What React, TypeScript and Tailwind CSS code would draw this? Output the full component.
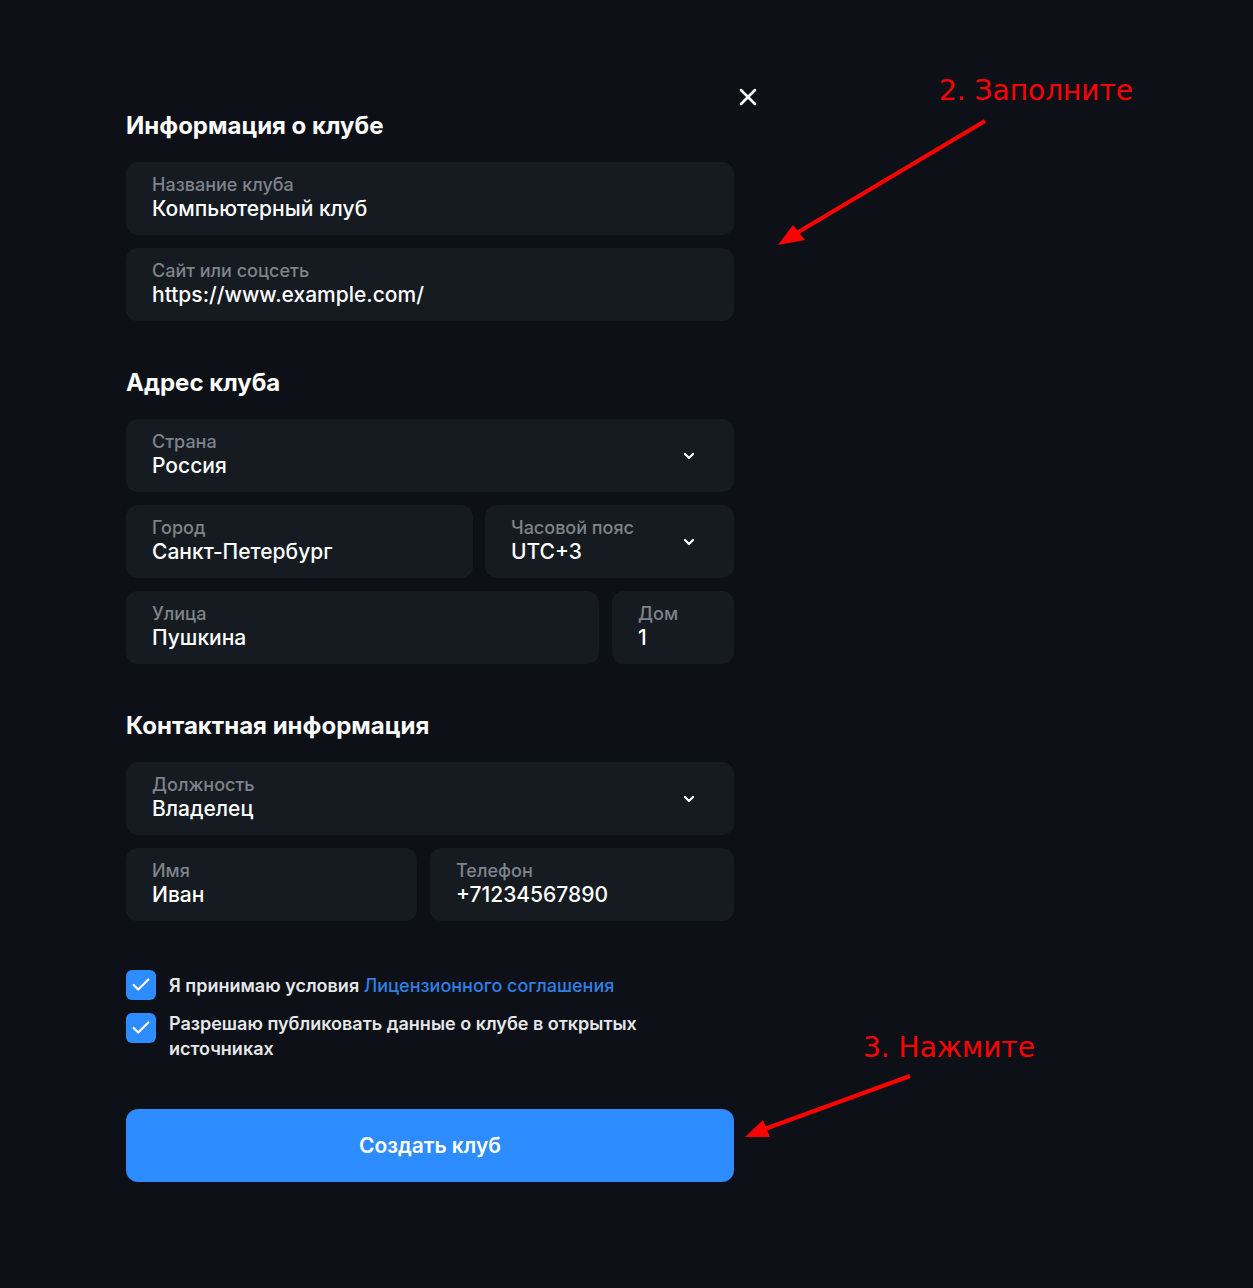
import React from 'react';
import { ChevronDown, X, Check } from 'lucide-react';

interface FieldProps {
  label: string;
  value: string;
  select?: boolean;
  className?: string;
}

const Field: React.FC<FieldProps> = ({ label, value, select, className }) => (
  <div
    className={`relative h-[73px] rounded-[12px] bg-[#161b22] pl-[26px] pr-[36px] flex flex-col justify-center ${className ?? ''}`}
  >
    <div className="text-[18px] leading-[22px] text-[#7f838a] font-medium -mt-[2px]">{label}</div>
    <div className="text-[21px] leading-[26px] text-white font-medium">{value}</div>
    {select && (
      <ChevronDown
        className="absolute right-[37px] top-1/2 -translate-y-1/2 text-white"
        size={16}
        strokeWidth={3.2}
      />
    )}
  </div>
);

const Heading: React.FC<{ children: React.ReactNode; className?: string }> = ({ children, className }) => (
  <h2 className={`text-[24px] leading-[28px] font-bold text-white ${className ?? ''}`}>{children}</h2>
);

const CheckBox: React.FC = () => (
  <div className="w-[30px] h-[30px] shrink-0 rounded-[6px] bg-[#2d8cff] flex items-center justify-center">
    <Check size={22} strokeWidth={2.4} className="text-white" />
  </div>
);

export default function App() {
  return (
    <div
      className="relative min-h-[1288px] bg-[#0d1117] overflow-hidden"
      style={{ fontFamily: 'Inter, "Noto Sans", sans-serif' }}
    >
      <div className="ml-[126px] w-[608px] pt-[112px] pb-[100px]">
        <Heading>Информация о клубе</Heading>
        <div className="mt-[22px] flex flex-col gap-[13px]">
          <Field label="Название клуба" value="Компьютерный клуб" />
          <Field label="Сайт или соцсеть" value="https://www.example.com/" />
        </div>

        <Heading className="mt-[48px]">Адрес клуба</Heading>
        <div className="mt-[22px] flex flex-col gap-[13px]">
          <Field label="Страна" value="Россия" select />
          <div className="flex gap-[12px]">
            <Field label="Город" value="Санкт-Петербург" className="w-[347px]" />
            <Field label="Часовой пояс" value="UTC+3" select className="flex-1" />
          </div>
          <div className="flex gap-[13px]">
            <Field label="Улица" value="Пушкина" className="w-[473px]" />
            <Field label="Дом" value="1" className="flex-1" />
          </div>
        </div>

        <Heading className="mt-[48px]">Контактная информация</Heading>
        <div className="mt-[22px] flex flex-col gap-[13px]">
          <Field label="Должность" value="Владелец" select />
          <div className="flex gap-[13px]">
            <Field label="Имя" value="Иван" className="w-[291px]" />
            <Field label="Телефон" value="+71234567890" className="flex-1" />
          </div>
        </div>

        <div className="mt-[49px] flex flex-col gap-[13px]">
          <div className="flex items-center gap-[13px]">
            <CheckBox />
            <span className="text-[18px] leading-[25px] font-semibold text-[#e6e7e9]">
              Я принимаю условия{' '}
              <span className="text-[#2f7fe3] font-medium">Лицензионного соглашения</span>
            </span>
          </div>
          <div className="flex items-start gap-[13px]">
            <CheckBox />
            <span className="text-[18px] leading-[25px] font-semibold text-[#e6e7e9] w-[490px] -mt-[2px]">
              Разрешаю публиковать данные о клубе в открытых источниках
            </span>
          </div>
        </div>

        <button className="mt-[48px] w-full h-[73px] rounded-[12px] bg-[#2d8cff] text-white text-[21px] font-semibold">
          Создать клуб
        </button>
      </div>

      <button className="absolute left-[734px] top-[83px] text-white">
        <X size={28} strokeWidth={2.2} />
      </button>

      <div
        className="absolute left-[939px] top-[72px] text-[28px] leading-[38px] text-[#ff0000]"
        style={{ fontFamily: '"DejaVu Sans", sans-serif' }}
      >
        2. Заполните
      </div>
      <div
        className="absolute left-[863px] top-[1029px] text-[28px] leading-[38px] text-[#ff0000]"
        style={{ fontFamily: '"DejaVu Sans", sans-serif' }}
      >
        3. Нажмите
      </div>

      <svg className="absolute inset-0 pointer-events-none" width="1253" height="1288" viewBox="0 0 1253 1288">
        <line x1="985" y1="121" x2="795" y2="234" stroke="#ff0000" strokeWidth="4" />
        <polygon points="778,245 793,225 805,240" fill="#ff0000" />
        <line x1="910" y1="1076" x2="762" y2="1130" stroke="#ff0000" strokeWidth="4" />
        <polygon points="745,1137 763,1120 770,1137" fill="#ff0000" />
      </svg>
    </div>
  );
}
